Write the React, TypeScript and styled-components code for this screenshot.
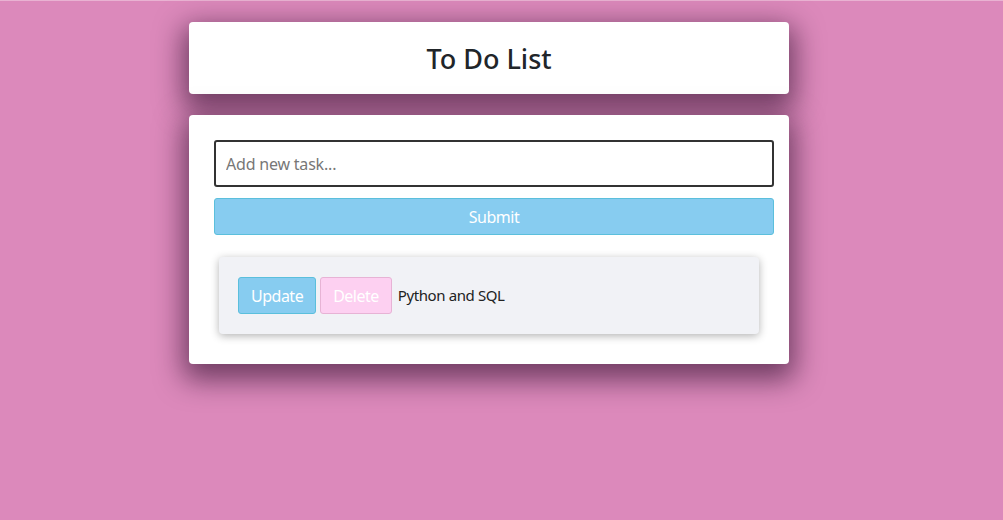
import React, { useState } from 'react';
import styled, { createGlobalStyle } from 'styled-components';

const GlobalStyle = createGlobalStyle`
  html, body {
    margin: 0;
    padding: 0;
    background: #dc89bb;
    font-family: 'Noto Sans', 'Open Sans', sans-serif;
  }
  * {
    box-sizing: border-box;
  }
`;

const Page = styled.div`
  min-height: 520px;
  border-top: 1px solid #e9b2d2;
  padding-top: 21px;
  display: flex;
  flex-direction: column;
  align-items: flex-start;
  padding-left: 189px;
`;

const Card = styled.div`
  width: 600px;
  background: #fff;
  border-radius: 4px;
  box-shadow: 0 10px 28px 6px rgba(40, 10, 40, 0.6);
`;

const HeaderCard = styled(Card)`
  height: 72px;
  display: flex;
  align-items: center;
  justify-content: center;
  margin-bottom: 21px;
`;

const Title = styled.h1`
  margin: 0;
  font-size: 27px;
  font-weight: 500;
  color: #212529;
`;

const Body = styled(Card)`
  padding: 25px 15px 30px 25px;
  height: 249px;
`;

const Input = styled.input`
  display: block;
  width: 560px;
  height: 47px;
  border: 2px solid #333;
  border-radius: 3px;
  padding: 0 10px;
  font-family: inherit;
  font-size: 16px;
  color: #333;
  outline: none;
  letter-spacing: -0.2px;

  &::placeholder {
    color: #777;
  }
`;

const Button = styled.button<{ $tone: 'blue' | 'pink' }>`
  height: 37px;
  border-radius: 3px;
  font-family: inherit;
  font-size: 16px;
  letter-spacing: -0.5px;
  color: #fff;
  cursor: pointer;
  background: ${(p) => (p.$tone === 'blue' ? '#87ccf0' : '#fdd0f1')};
  border: 1px solid ${(p) => (p.$tone === 'blue' ? '#5bbfdc' : '#e7b3d5')};
  padding: 0 12px;
`;

const SubmitButton = styled(Button)`
  display: block;
  width: 560px;
  margin-top: 11px;
`;

const Task = styled.div`
  width: 540px;
  height: 77px;
  margin: 22px 0 0 5px;
  background: #f1f2f6;
  border-radius: 4px;
  box-shadow: 0 2px 8px rgba(0, 0, 0, 0.3);
  display: flex;
  align-items: center;
  padding: 0 19px;
  gap: 4px;
`;

const TaskText = styled.span`
  font-size: 15px;
  letter-spacing: -0.4px;
  color: #222;
  margin: -2px 0 0 2px;
`;

const App = () => {
  const [value, setValue] = useState('');
  return (
    <>
      <GlobalStyle />
      <Page>
        <HeaderCard>
          <Title>To Do List</Title>
        </HeaderCard>
        <Body>
          <Input
            placeholder="Add new task..."
            value={value}
            onChange={(e) => setValue(e.target.value)}
          />
          <SubmitButton $tone="blue">Submit</SubmitButton>
          <Task>
            <Button $tone="blue">Update</Button>
            <Button $tone="pink">Delete</Button>
            <TaskText>Python and SQL</TaskText>
          </Task>
        </Body>
      </Page>
    </>
  );
};

export default App;
